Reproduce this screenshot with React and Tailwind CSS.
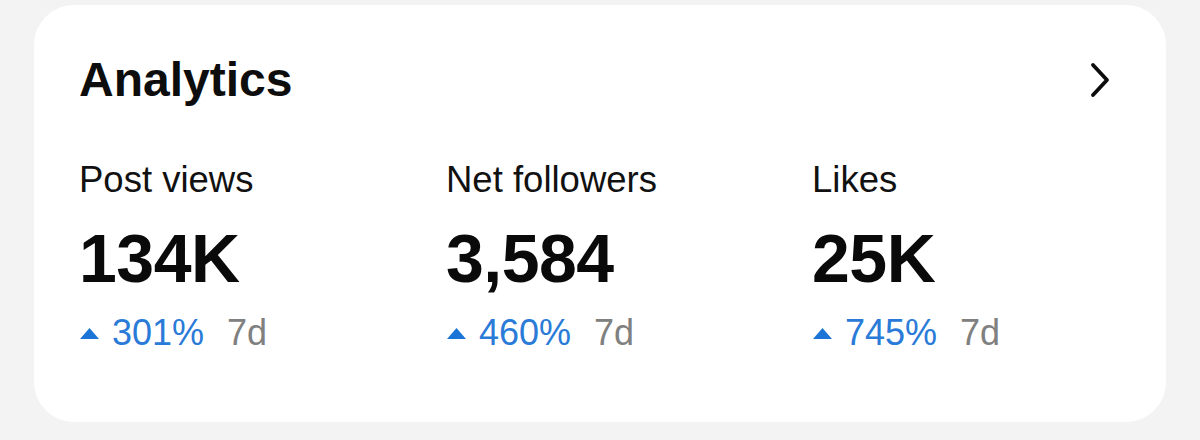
import React from "react";

const stats = [
  { label: "Post views", value: "134K", pct: "301%" },
  { label: "Net followers", value: "3,584", pct: "460%" },
  { label: "Likes", value: "25K", pct: "745%" },
];

function Stat({ label, value, pct }) {
  return (
    <div className="flex flex-col">
      <div className="text-[36.5px] leading-[36px] text-[#111111]">{label}</div>
      <div className="mt-[26px] text-[68px] leading-[68px] font-bold text-[#0a0a0a] tracking-[-0.5px]">{value}</div>
      <div className="mt-[23px] flex items-center text-[36px] leading-[36px]">
        <svg width="19" height="11" viewBox="0 0 19 11" className="ml-px mr-[13px] mt-[1px]">
          <polygon points="9.5,0 19,11 0,11" fill="#1b75d6" />
        </svg>
        <span className="text-[#2a7bd8]">{pct}</span>
        <span className="ml-[23px] text-[#808080]">7d</span>
      </div>
    </div>
  );
}

export default function App() {
  return (
    <div
      className="w-[1200px] h-[440px] bg-[#f3f3f3] pt-[5px] px-[34px]"
      style={{ fontFamily: '"Liberation Sans", Arial, sans-serif' }}
    >
      <div className="h-[417px] bg-white rounded-[40px] pl-[45px] pr-[55px] pt-[51px]">
        <div className="flex items-center justify-between h-[48px]">
          <div className="text-[48px] leading-[48px] font-bold text-[#0d0d0d]">Analytics</div>
          <svg width="22" height="36" viewBox="0 0 22 36" fill="none">
            <polyline points="4,3 18,18 4,33" stroke="#0d0d0d" strokeWidth="3.8" strokeLinecap="round" strokeLinejoin="round" />
          </svg>
        </div>
        <div className="mt-[58px] grid grid-cols-[367px_366px_1fr]">
          {stats.map((s) => (
            <Stat key={s.label} {...s} />
          ))}
        </div>
      </div>
    </div>
  );
}
